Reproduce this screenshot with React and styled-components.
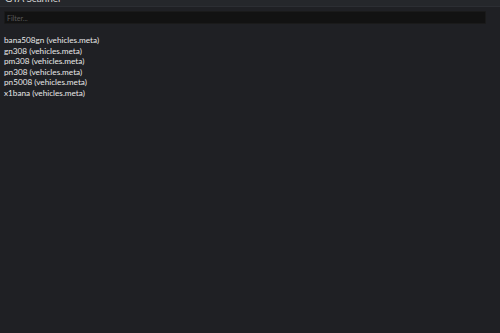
import React from 'react'
import styled, { createGlobalStyle } from 'styled-components'

const ITEMS = [
  'bana508gn (vehicles.meta)',
  'gn308 (vehicles.meta)',
  'pm308 (vehicles.meta)',
  'pn308 (vehicles.meta)',
  'pn5008 (vehicles.meta)',
  'x1bana (vehicles.meta)',
]

const GlobalStyle = createGlobalStyle`
  html, body {
    margin: 0;
    padding: 0;
    background: #1f2024;
  }
  #root {
    min-height: 333px;
  }
`

export default class App extends React.Component {
  render() {
    return (
      <Wrapper>
        <GlobalStyle />
        <Header>
          <Title>GTA Scanner</Title>
          <Close>×</Close>
        </Header>

        <FilterRow>
          <FilterInput placeholder="Filter..." />
        </FilterRow>

        <List>
          {ITEMS.map((x, index) => (
            <Item key={index}>{x}</Item>
          ))}
        </List>
      </Wrapper>
    )
  }
}

const Wrapper = styled.div`
  width: 500px;
  height: 333px;
  background: #1f2024;
  font-family: 'Lato', 'Noto Sans', sans-serif;
  color: #e8e8e8;
  overflow: hidden;
`

const Header = styled.div`
  box-sizing: border-box;
  height: 7px;
  display: flex;
  align-items: flex-end;
  justify-content: space-between;
  padding: 0 6px 0 5px;
  background: #25272b;
  border-bottom: 1px solid #2c2e33;
  overflow: hidden;
`

const Title = styled.div`
  flex-shrink: 0;
  font-size: 10px;
  line-height: 12px;
  margin-bottom: 2px;
  color: #d8d8d8;
`

const Close = styled.div`
  flex-shrink: 0;
  font-size: 12px;
  line-height: 12px;
  margin-bottom: 3px;
  color: #9a9a9a;
`

const FilterRow = styled.div`
  padding: 4px 14px 0 4px;
`

const FilterInput = styled.input`
  display: block;
  box-sizing: border-box;
  width: 100%;
  height: 13px;
  margin: 0;
  padding: 0 2px;
  background: #121212;
  border: 1px solid #1a1a1a;
  border-radius: 1px;
  outline: none;
  font-family: inherit;
  font-size: 7px;
  color: #ccc;

  &::placeholder {
    color: #5a5a5a;
  }
`

const List = styled.div`
  padding: 11px 4px 0;
`

const Item = styled.div`
  font-size: 8.2px;
  line-height: 10.6px;
  white-space: nowrap;
`
